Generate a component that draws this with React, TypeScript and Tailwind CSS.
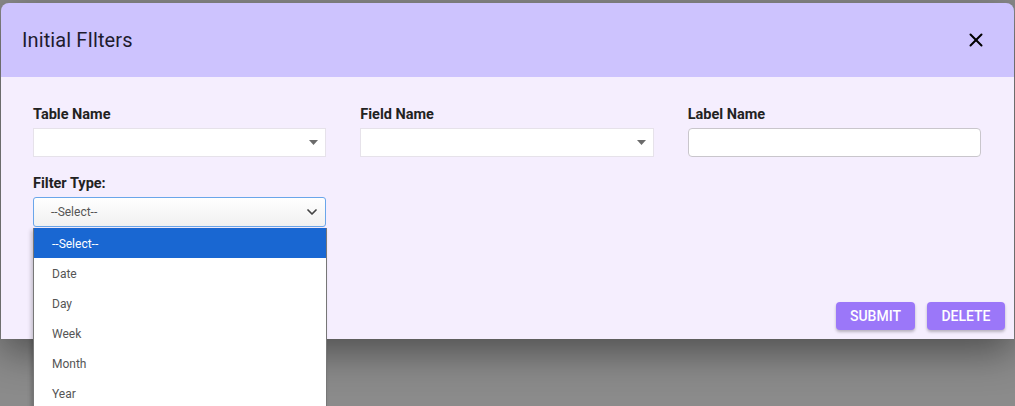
import { X, ChevronDown } from 'lucide-react';

const options = ['--Select--', 'Date', 'Day', 'Week', 'Month', 'Year'];

function Caret() {
  return (
    <svg width="9" height="5" viewBox="0 0 9 5" className="text-[#6b6b6b]">
      <path d="M0 0 L9 0 L4.5 5 Z" fill="currentColor" />
    </svg>
  );
}

function FakeSelect() {
  return (
    <div className="h-[29px] bg-white border border-[#e6e2ea] flex items-center justify-end pr-[7px]">
      <Caret />
    </div>
  );
}

export default function App() {
  return (
    <div className="relative w-[1015px] h-[406px] overflow-hidden bg-[#8b8b8b] pt-[3px] px-[1px] font-['Roboto',sans-serif]">
      {/* Modal */}
      <div className="h-[336px] rounded-t-[8px] overflow-hidden flex flex-col shadow-[0_12px_40px_rgba(0,0,0,0.45)]">
        {/* Header */}
        <div className="h-[74px] bg-[#cdc3fe] flex items-center justify-between pl-[21px] pr-[27px]">
          <h2 className="text-[20px] text-[#1e1b2e] tracking-[0.1px]">Initial FIlters</h2>
          <X size={22} strokeWidth={2.2} className="text-black" />
        </div>

        {/* Body */}
        <div className="flex-1 bg-[#f5eefe] flex flex-col pt-[29px] pl-[32px] pr-[9px] pb-[9px]">
          <div className="grid grid-cols-3 gap-x-[34px] pr-[24px]">
            <div>
              <label className="block text-[14.5px] font-bold text-[#222] mb-[5px] leading-[17px]">Table Name</label>
              <FakeSelect />
            </div>
            <div>
              <label className="block text-[14.5px] font-bold text-[#222] mb-[5px] leading-[17px]">Field Name</label>
              <FakeSelect />
            </div>
            <div>
              <label className="block text-[14.5px] font-bold text-[#222] mb-[5px] leading-[17px]">Label Name</label>
              <div className="h-[29px] bg-white border border-[#c9c6cc] rounded-[4px]" />
            </div>
            <div className="mt-[18px]">
              <label className="block text-[14.5px] font-bold text-[#222] mb-[5px] leading-[17px]">Filter Type:</label>
              <div className="h-[30px] rounded-[3px] border border-[#6aa6ea] bg-gradient-to-b from-white to-[#f1f1f1] flex items-center justify-between pl-[17px] pr-[5px]">
                <span className="text-[12px] text-[#555]">--Select--</span>
                <ChevronDown size={16} strokeWidth={2.6} className="text-[#444]" />
              </div>
            </div>
          </div>

          <div className="mt-auto flex justify-end gap-[12px]">
            <button className="w-[79px] h-[28px] rounded-[4px] bg-[#9b77f9] text-white text-[14px] font-medium uppercase shadow-[0_2px_3px_rgba(0,0,0,0.25)]">
              Submit
            </button>
            <button className="w-[78px] h-[28px] rounded-[4px] bg-[#9b77f9] text-white text-[14px] font-medium uppercase shadow-[0_2px_3px_rgba(0,0,0,0.25)]">
              Delete
            </button>
          </div>
        </div>
      </div>

      {/* Open dropdown list */}
      <div className="absolute left-[33px] top-[228px] w-[294px] bg-white border-x border-[#777] shadow-[-2px_2px_4px_rgba(0,0,0,0.2)]">
        {options.map((opt, i) => (
          <div
            key={opt}
            className={
              i === 0
                ? 'h-[30px] flex items-center pl-[18px] pt-[1px] text-[12px] bg-[#1967d2] text-white'
                : 'h-[30px] flex items-center pl-[18px] pt-[2px] text-[12px] text-[#555]'
            }
          >
            {opt}
          </div>
        ))}
      </div>
    </div>
  );
}
